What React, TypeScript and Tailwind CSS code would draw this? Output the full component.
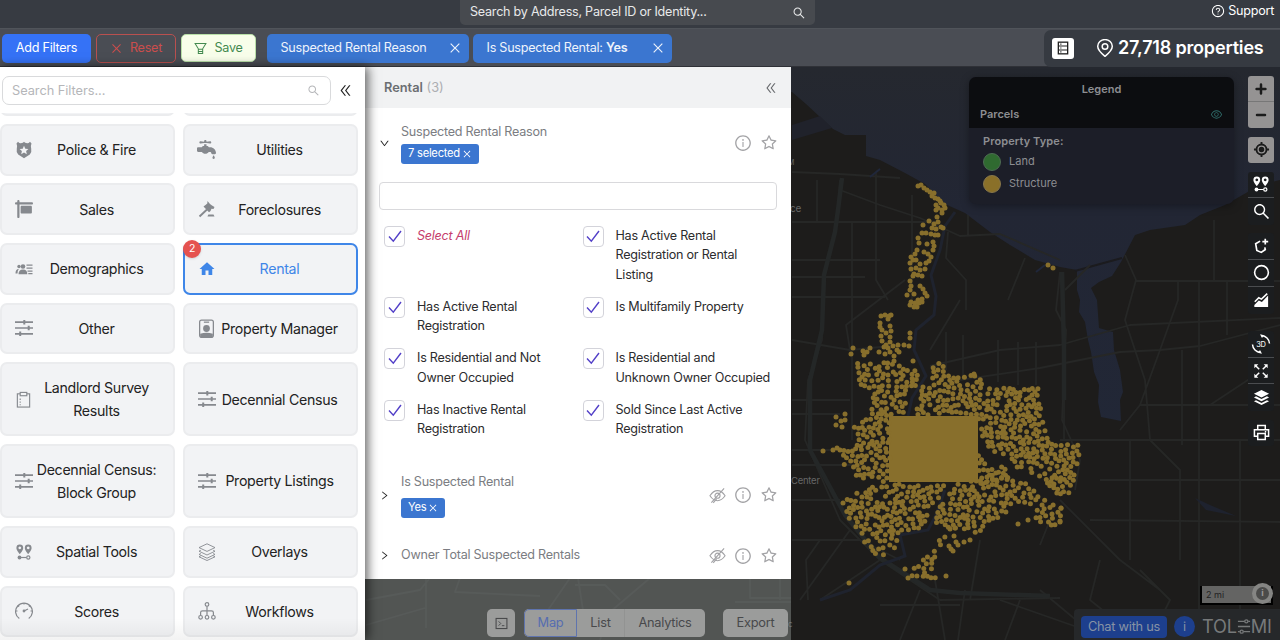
import React from "react";
import {
  AiOutlineClose, AiOutlineDoubleLeft, AiOutlineDown, AiOutlineEye, AiOutlineInfoCircle,
  AiOutlineQuestionCircle, AiOutlineRight, AiOutlineSearch, AiOutlineStar,
} from "react-icons/ai";
import { FaFaucetDrip, FaSignHanging } from "react-icons/fa6";
import { MdHome } from "react-icons/md";

type Pt = [number, number];

/* ---------- map data ---------- */

const CLUSTERS: Pt[][] = [
  [[853, 363], [897, 362], [902, 364], [910, 370], [918, 370], [920, 382], [908, 393], [905, 415], [870, 415], [873, 392], [860, 385]],
  [[922, 387], [930, 384], [945, 374], [975, 375], [995, 388], [1038, 386], [1040, 400], [1045, 425], [1048, 442], [1079, 444], [1079, 465], [1074, 485], [1068, 497], [1052, 495], [1047, 482], [1030, 475], [1032, 460], [1018, 472], [1010, 462], [985, 445], [977, 415], [915, 415], [918, 398]],
  [[853, 427], [872, 415], [890, 412], [890, 482], [856, 480], [853, 467], [843, 465], [842, 450], [854, 448]],
  [[978, 452], [990, 465], [1008, 468], [1010, 480], [978, 484]],
  [[843, 502], [868, 486], [890, 484], [945, 485], [935, 505], [928, 515], [922, 528], [900, 532], [896, 548], [885, 558], [875, 556], [862, 540], [852, 525], [846, 512]],
  [[952, 486], [978, 478], [1000, 470], [1010, 478], [1030, 485], [1046, 500], [1040, 503], [1010, 507], [1008, 515], [990, 522], [978, 533], [970, 532], [960, 530], [935, 525], [938, 508], [948, 498]],
  [[1036, 505], [1052, 502], [1062, 508], [1060, 525], [1045, 525], [1035, 520]],
  [[941, 536], [946, 536], [936, 555], [934, 566], [930, 575], [940, 580], [905, 580], [912, 570], [920, 562], [932, 553]],
  [[932, 366], [944, 361], [944, 372], [932, 379]],
];

const SINGLES: Pt[] = [
  [918, 186], [921, 185], [924, 188], [927, 190], [930, 192], [934, 193], [932, 196], [935, 198], [938, 199], [940, 201], [936, 205], [941, 203], [938, 208], [944, 205], [936, 210], [942, 210], [945, 208], [942, 213],
  [929, 221], [937, 217], [938, 222], [934, 224], [923, 225], [941, 227], [936, 229], [943, 228], [932, 228], [922, 233], [926, 233], [931, 234], [935, 235], [938, 235], [918, 238], [919, 243], [927, 244], [933, 242], [934, 246], [933, 250],
  [917, 250], [915, 254], [911, 257], [924, 252], [928, 254], [931, 257], [929, 261], [926, 263], [913, 260], [910, 263], [916, 260], [920, 264], [916, 268], [911, 269], [920, 270], [925, 269], [914, 274], [918, 275], [922, 276], [913, 276],
  [910, 281], [911, 286], [910, 290], [907, 295], [914, 294], [920, 286], [923, 289], [925, 293], [927, 296], [918, 300], [922, 299], [911, 302], [915, 303], [919, 303], [914, 307], [917, 307], [910, 305], [922, 302],
  [881, 316], [885, 315], [889, 316], [891, 315], [888, 319], [880, 323], [880, 327], [882, 330], [890, 326], [891, 331], [881, 336], [886, 333], [890, 337], [882, 341], [890, 342], [886, 345], [884, 347], [888, 348],
  [910, 333], [910, 338], [909, 346], [904, 345], [898, 345], [893, 346], [897, 350], [890, 352], [885, 354], [894, 356], [899, 352], [879, 352], [853, 348], [851, 354], [863, 351], [864, 355], [867, 352], [870, 348], [894, 361],
  [913, 361], [974, 374], [823, 451], [849, 583], [1018, 524], [1028, 520], [946, 576], [905, 569], [843, 503], [1048, 265], [1053, 268],
  [836, 417], [845, 414], [841, 421], [845, 420], [836, 425], [842, 427], [833, 450], [837, 448], [840, 450],
  [950, 529], [955, 528], [954, 536], [949, 546], [953, 551], [958, 545], [951, 549], [956, 542], [964, 542], [970, 540], [1061, 508], [1060, 521],
];

const ROADS = [
  "M792 172 L840 174 L900 178 M817 180 V222 M840 180 L836 230 L825 275 L822 340 L808 380 L805 440 L840 520 L880 560 L940 600 L1060 598",
  "M792 222 H940 M792 260 H880 M792 277 H865 M792 297 H885 M876 172 V280 L888 300 M912 195 V305 M852 222 V440",
  "M840 190 L880 205 L920 218 L960 236 L1000 234 L1060 260 M948 232 L946 258 L966 280 V310 M968 215 V235 M1025 258 L1008 300",
  "M792 340 L850 350 L900 345 M850 350 L846 325 L905 280 M792 400 H850 M792 414 H840 M792 450 H850 M792 465 H865",
  "M960 300 L930 350 M946 332 V370 M963 335 V380 M998 340 V382 M1018 342 V385 M1036 342 V385 M1064 352 V440",
  "M930 366 L1000 350 L1060 345 L1130 325 L1280 318 M960 380 L1040 368 L1120 352 L1160 350 L1200 346 L1280 325",
  "M1060 272 L1056 310 L1066 330 L1062 420 L1080 460 L1075 490 M1090 265 L1065 290",
  "M1125 255 L1136 280 L1125 320 L1145 380 L1150 440 L1180 470 V560 M1178 282 V300 L1160 350 L1140 405 L1120 430 M1135 281 H1280 M1214 220 V282 M1199 281 V640 M1227 281 V335 M1182 350 V445 M1140 405 H1280 M1210 405 L1260 372",
  "M792 500 H840 M792 540 H860 L900 560 M850 530 L800 600 M820 540 L806 560 L808 600 M880 560 L820 600 M880 605 H960 M920 590 L900 640 M935 580 L945 640 M965 590 L958 640",
  "M1060 500 L1120 560 L1160 590 M1040 590 L1100 640 M1100 560 L1090 600 L1140 640 M1140 570 L1170 600 L1150 640 M980 540 L970 600 M1000 600 L1100 635 M1020 600 L1005 640",
  "M1060 440 H1280 M1100 480 H1280 M1130 440 V560 M1240 440 V640 M1090 520 L1280 522 M1050 520 L1040 545",
  "M366 600 L420 590 L430 578 M426 578 V628 M460 578 L455 592 L540 596 M366 625 L425 608 M570 578 L548 610 M575 585 H605 L620 600 M578 578 L583 610 M650 578 L610 612 L600 640 M750 578 V598 H791 M735 602 H791 M780 578 V600",
];

function inside([x, y]: Pt, poly: Pt[]) {
  let hit = false;
  for (let i = 0, j = poly.length - 1; i < poly.length; j = i++) {
    const [xi, yi] = poly[i];
    const [xj, yj] = poly[j];
    if (yi > y !== yj > y && x < ((xj - xi) * (y - yi)) / (yj - yi) + xi) hit = !hit;
  }
  return hit;
}

function scatter(): Pt[] {
  let seed = 7321;
  const rnd = () => {
    seed = (seed * 1664525 + 1013904223) % 4294967296;
    return seed / 4294967296;
  };
  const out: Pt[] = [];
  for (const poly of CLUSTERS) {
    const xs = poly.map((p) => p[0]);
    const ys = poly.map((p) => p[1]);
    const x0 = Math.min(...xs), x1 = Math.max(...xs), y0 = Math.min(...ys), y1 = Math.max(...ys);
    const local: Pt[] = [];
    const tries = ((x1 - x0) * (y1 - y0)) / 8;
    for (let i = 0; i < tries; i++) {
      const p: Pt = [x0 + rnd() * (x1 - x0), y0 + rnd() * (y1 - y0)];
      if (!inside(p, poly)) continue;
      if (local.some((q) => Math.hypot(q[0] - p[0], q[1] - p[1]) < 3.6)) continue;
      local.push(p);
    }
    out.push(...local);
  }
  return out;
}

const DOTS = [...scatter(), ...SINGLES];

function MapCanvas() {
  return (
    <svg className="absolute inset-0 h-full w-full" viewBox="0 67 1280 573" aria-hidden="true">
      <defs>
        <linearGradient id="water" x1="0" y1="0" x2="0" y2="1">
          <stop offset="0" stopColor="#25282f" />
          <stop offset="0.25" stopColor="#222634" />
          <stop offset="1" stopColor="#212838" />
        </linearGradient>
      </defs>
      <rect x="0" y="67" width="1280" height="573" fill="url(#water)" />
      <path
        fill="#1d1c1b"
        d="M0 92H792L806 104L820 117L833 129L845 135H866V156L880 160L905 173L925 184L945 204L965 213L990 232L1010 245L1035 260L1060 267L1077 270L1077 290L1080 300L1079 312L1085 322L1088 340L1091 352L1094 372L1099 385L1098 402L1101 417L1121 421L1120 400L1123 392L1120 370L1114 350L1113 332L1099 328L1097 300L1091 288L1099 282L1112 276L1121 262L1135 235L1150 230L1185 225L1200 215L1225 205L1260 185L1280 180V640H0Z"
      />
      <path d="M1075 271L1100 264L1122 258" fill="none" stroke="#1b1b1e" strokeWidth="2" />
      <path d="M792 125L820 116L832 128L792 140Z" fill="#20222b" />
      <g fill="none" stroke="#262726" strokeWidth="1.800" strokeLinejoin="round">
        {ROADS.map((d) => <path key={d} d={d} />)}
      </g>
      <g fill="none" stroke="#242727" strokeWidth="4.500" strokeLinejoin="round">
        <path d="M842 178L838 210L835 232L824 275L822 330L810 380V450L845 515L880 558L930 590L960 593L1050 596M1062 272L1064 350V400" />
      </g>
      <path
        d="M955 212L945 226L940 250L931 275L936 296L934 315L916 330L914 350L926 376L912 398L908 416M945 490L936 515L928 530L900 535L905 556L880 565L850 590L820 600"
        fill="none" stroke="#1f232e" strokeWidth="3"
      />
      <path d="M870 177L880 169L876 172M1036 272L1045 265" fill="#20273a" stroke="#20273a" strokeWidth="2" />
      <path d="M1060 635L1064 626M1195 498L1210 505L1236 516L1206 510Z" fill="#1e222e" />
      <g fill="#886f2c">
        <rect x="889" y="416" width="89" height="66" />
        {DOTS.map(([x, y], i) => <circle key={i} cx={x} cy={y} r="2.5" />)}
      </g>
      <g fill="#666" fontFamily="Inter, sans-serif" fontSize="10">
        <text x="790" y="212">ce</text>
        <text x="791" y="484" fontSize="9.5">Center</text>
        <text x="788" y="165" fontSize="7">M</text>
        <text x="788" y="627" fontSize="8">c</text>
      </g>
    </svg>
  );
}

/* ---------- icons ---------- */

const svg = (children: React.ReactNode, cls = "h-[18px] w-[18px]") => (
  <svg viewBox="0 0 18 18" className={cls} fill="none" stroke="currentColor" strokeWidth="1.2">{children}</svg>
);

const Badge = () => svg(
  <>
    <path d="M1.5 2.5L3 .8Q5 3 6.6 2Q8 2 9 .8Q10 2 11.400 2Q13 3 15 .8L16.500 2.500Q15.400 5 16.200 7.500Q17 11 14.800 13.500L9 17.200L3.200 13.500Q1 11 1.800 7.500Q2.600 5 1.500 2.500Z" fill="currentColor" stroke="none" />
    <path d="M9 4.800L10.300 7.700L13.400 8L11.100 10.100L11.800 13.200L9 11.600L6.200 13.200L6.900 10.100L4.600 8L7.700 7.700Z" fill="#f3f4f6" stroke="none" />
  </>, "h-[18px] w-[18px]");
const Gavel = () => svg(
  <>
    <path d="M1.500 16.500L9 9.500" strokeWidth="1.900" />
    <path d="M9.500 1L12 4L14 5.500L16.500 7L15.500 9L13.500 8.800L12.500 11L11 12.200L5.500 6.500L7.500 5L9.300 3.500Z" fill="currentColor" stroke="none" />
    <path d="M9.500 16.500L10.300 14.500H15.500L16.500 16.500Z" fill="currentColor" stroke="none" />
  </>, "h-[18px] w-[18px]");
const People = () => svg(
  <g fill="currentColor" stroke="none">
    <circle cx="8" cy="6.500" r="2.300" /><circle cx="4" cy="6.500" r="1.700" />
    <path d="M3.500 14.200Q3.500 9.500 8 9.500T12.300 14.200ZM.5 13.500Q.3 9 3.800 8.900Q2.300 11 2.500 13.500ZM11.500 4.500H17.500V5.700H11.500ZM11.500 7.500H17.500V8.700H11.500ZM12.500 10.500H17.500V11.700H12.500ZM13.300 13H17.500V14.200H13.300Z" />
  </g>);
const Sliders = () => svg(
  <>
    <path d="M0 3.200H18M0 9H18M0 14.800H18" strokeWidth="1.700" />
    <path d="M9.300 1V5.400M13.700 6.800V11.200M5.200 12.600V17" strokeWidth="2" />
  </>);
const IdCard = () => svg(
  <>
    <rect x="2.500" y="1" width="13" height="16.500" rx="1.800" />
    <path d="M6.500 3H11.500" />
    <circle cx="9" cy="9" r="3.200" fill="currentColor" stroke="none" />
    <path d="M3 14Q9 12 15 14V17H3Z" fill="currentColor" stroke="none" />
  </>, "h-[19px] w-[19px]");
const Clipboard = () => svg(
  <>
    <rect x="2.500" y="3" width="13" height="14" />
    <rect x="5.500" y="1.500" width="7" height="3.500" fill="#f3f4f6" />
    <path d="M5.500 8V15" strokeDasharray="1.500 1.500" />
  </>, "h-[17px] w-[17px]");
const Pins = ({ cls }: { cls?: string }) => svg(
  <>
    <path fillRule="evenodd" d="M4.800 1.500A3.400 3.400 0 0 1 8.200 4.900C8.200 7.500 4.800 11 4.800 11S1.400 7.500 1.400 4.900A3.400 3.400 0 0 1 4.800 1.500ZM4.800 3.500A1.400 1.400 0 1 0 4.810 3.500ZM13.200 1.500A3.400 3.400 0 0 1 16.600 4.900C16.600 7.500 13.200 11 13.200 11S9.800 7.500 9.800 4.900A3.400 3.400 0 0 1 13.200 1.500ZM13.200 3.500A1.400 1.400 0 1 0 13.210 3.500Z" fill="currentColor" stroke="none" />
    <circle cx="4.500" cy="14.500" r="1.900" fill="currentColor" stroke="none" />
    <path d="M5 14.500H11.500" /><circle cx="13.300" cy="14.500" r="1.600" />
  </>, cls);
const Layers = () => svg(
  <path d="M9 .8L17 4.600L9 8.400L1 4.600ZM2.800 7.300L1 8.200L9 12L17 8.200L15.200 7.300M2.800 10.500L1 11.400L9 15.200L17 11.400L15.200 10.500M2.800 12.900L1 13.800L9 17.500L17 13.800L15.200 12.900" strokeWidth=".9" />);
const Gauge = () => svg(
  <>
    <path d="M4.300 16.500A8.400 8.400 0 1 1 13.700 16.500" />
    <path d="M9 9L13 7M9 1V2.500M2.800 3.500L4 4.700M15.200 3.500L14 4.700M1 9H2.500M15.500 9H17" />
    <circle cx="9" cy="9" r=".8" />
  </>);
const Tree = () => svg(
  <>
    <circle cx="9" cy="2.400" r="1.800" /><circle cx="2.600" cy="15.300" r="1.800" /><circle cx="9" cy="15.300" r="1.800" /><circle cx="15.400" cy="15.300" r="1.800" />
    <path d="M9 4.300V13.500M2.600 13.500V10.500Q2.600 8.800 4.500 8.800H13.500Q15.400 8.800 15.400 10.500V13.500" />
  </>);
const HiddenEye = () => svg(
  <>
    <path d="M1 9.300Q4.500 3.800 9 3.800T17 9.300Q13.500 14.500 9 14.500T1 9.300Z" />
    <circle cx="9" cy="9.200" r="2.700" /><path d="M2.500 16.500L16 1.500M4.500 16.700L8 12.700" />
  </>, "h-[17px] w-[17px]");
const Funnel = () => svg(
  <path d="M1.500 2H16.500L12 9.500V16H6V9.500ZM6 10H12M6 13H12" strokeWidth="1.400" />, "h-[13px] w-[13px]");
const MapPin = () => svg(
  <><path d="M9 17.300Q1.700 11.500 1.700 7.300A7.300 6.700 0 0 1 16.300 7.300Q16.300 11.500 9 17.300Z" strokeWidth="1.500" /><circle cx="9" cy="7.500" r="2.800" strokeWidth="1.500" /></>);
const Sheet = () => svg(
  <>
    <rect x="3" y="1.500" width="12" height="15" strokeWidth="1.700" />
    <path d="M3 6.500H15M3 11.500H15M5.500 4H7M5.500 9H7M5.500 14H7" strokeWidth="1.400" />
  </>, "h-[14px] w-[14px]");
const Locate = () => svg(
  <><circle cx="9" cy="9" r="5.300" strokeWidth="2" /><circle cx="9" cy="9" r="2.300" fill="currentColor" /><path d="M9 1V3.500M9 14.500V17M1 9H3.500M14.500 9H17" strokeWidth="2" /></>, "h-[17px] w-[17px]");
const PolyAdd = () => svg(
  <><path d="M8 3.500L3 6.500L4.300 14L9.300 16.200L13.800 13L13.300 10.500" strokeWidth="1.900" /><path d="M13.800.8V7.400M10.500 4.100H17.100" strokeWidth="1.900" /></>, "h-4 w-4");
const Circle = () => svg(<circle cx="9" cy="9" r="7.300" strokeWidth="1.700" />, "h-[17px] w-[17px]");
const Chart = () => svg(
  <><path d="M1.500 17V14.500L6.500 9.700L10 11.200L17 4V17Z" fill="currentColor" stroke="none" /><path d="M2 11L6.500 6.500L9.500 8L16 1.800" strokeWidth="1.800" /></>, "h-4 w-4");
const Rotate3D = () => (
  <svg viewBox="0 0 20 20" className="h-5 w-5" fill="none" stroke="currentColor" strokeWidth="1.500">
    <path d="M10.500 1.500A8.500 8.500 0 0 1 18.500 9.500M9.500 18.500A8.500 8.500 0 0 1 1.500 10.500" />
    <path d="M9 .2L13 1.200L11 4ZM11 19.800L7 18.800L9 16Z" fill="currentColor" stroke="none" />
    <text x="10" y="12.700" textAnchor="middle" fontSize="7.500" fontFamily="Inter, sans-serif" fill="currentColor" stroke="none">3D</text>
  </svg>
);
const Expand = () => svg(
  <>
    <path d="M3 3L7 7M15 3L11 7M3 15L7 11M15 15L11 11" strokeWidth="1.700" />
    <path d="M1.500 1.500H6L1.500 6ZM16.500 1.500V6L12 1.500ZM1.500 16.500V12L6 16.500ZM16.500 16.500H12L16.500 12Z" fill="currentColor" stroke="none" />
  </>, "h-4 w-4");
const Stack = () => svg(
  <g fill="currentColor" stroke="none">
    <path d="M9 1L17 5L9 9L1 5ZM3.200 7.800L9 10.700L14.800 7.800L17 9L9 13L1 9ZM3.200 11.800L9 14.700L14.800 11.800L17 13L9 17L1 13Z" />
  </g>, "h-[17px] w-[17px]");
const Printer = () => svg(
  <path d="M5 6V1.500H13V6M5 13H1.500V6H16.500V13H13M5 10H13V16.500H5ZM14 8.200H12.500" strokeWidth="1.600" />, "h-[17px] w-[17px]");
const Terminal = () => svg(
  <><rect x="1.500" y="2" width="15" height="14" strokeWidth="1.500" /><path d="M5 6L8 9L5 12M9.500 12H13" strokeWidth="1.300" /></>, "h-[13px] w-[13px]");

/* ---------- filter categories ---------- */

type Category = { label: string; icon: React.ReactNode; active?: boolean; tall?: boolean };

const CATEGORIES: Category[] = [
  { label: "Police & Fire", icon: <Badge /> },
  { label: "Utilities", icon: <FaFaucetDrip size={19} /> },
  { label: "Sales", icon: <FaSignHanging size={18} /> },
  { label: "Foreclosures", icon: <Gavel /> },
  { label: "Demographics", icon: <People /> },
  { label: "Rental", icon: <MdHome size={18} />, active: true },
  { label: "Other", icon: <Sliders /> },
  { label: "Property Manager", icon: <IdCard /> },
  { label: "Landlord Survey Results", icon: <Clipboard />, tall: true },
  { label: "Decennial Census", icon: <Sliders />, tall: true },
  { label: "Decennial Census: Block Group", icon: <Sliders />, tall: true },
  { label: "Property Listings", icon: <Sliders />, tall: true },
  { label: "Spatial Tools", icon: <Pins /> },
  { label: "Overlays", icon: <Layers /> },
  { label: "Scores", icon: <Gauge /> },
  { label: "Workflows", icon: <Tree /> },
];

function CategoryTile({ label, icon, active, tall }: Category) {
  return (
    <div
      className={`relative flex items-center rounded-[7px] border-2 bg-[#f2f3f5] pl-[12px] ${tall ? "h-[74.1px]" : "h-[51.8px]"} ${
        active ? "border-[#3f86e8] text-[#3f86e8]" : "border-[#ebecee] text-[#222]"
      }`}
    >
      {active && (
        <span className="absolute -top-[5px] -left-[2px] flex h-[18px] w-[18px] items-center justify-center rounded-full bg-[#e5524f] text-[10.500px] text-white shadow">2</span>
      )}
      <span className={`flex w-[19px] shrink-0 justify-center ${active ? "" : "text-[#86898e]"}`}>{icon}</span>
      <span className="flex-1 pt-[1px] pr-[13px] text-center text-[14.200px] leading-[22.300px] tracking-[-0.32px]">{label}</span>
    </div>
  );
}

function CategoryPanel() {
  return (
    <aside className="relative z-20 flex w-[365px] shrink-0 flex-col bg-white shadow-[3px_0_10px_rgba(0,0,0,0.6)]">
      <div className="flex h-[46px] shrink-0 items-center pt-[1px] pl-[2px]">
        <div className="flex h-[29px] w-[329px] items-center justify-between rounded-[7px] border border-[#d9dadc] pr-[10px] pl-[9px] text-[12.800px] tracking-[-0.05px] text-[#b5b6b9]">
          <span>Search Filters...</span>
          <AiOutlineSearch size={13} />
        </div>
        <AiOutlineDoubleLeft size={15} className="ml-[7px] text-[#222]" />
      </div>
      <div className="min-h-0 flex-1 overflow-hidden">
        <div className="-mt-[49px] grid w-[358px] grid-cols-2 gap-x-[8px] gap-y-[7.800px]">
          <div className="h-[52px] rounded-[7px] border-2 border-[#ebecee] bg-[#f2f3f5]" />
          <div className="h-[52px] rounded-[7px] border-2 border-[#ebecee] bg-[#f2f3f5]" />
          {CATEGORIES.map((c) => <CategoryTile key={c.label} {...c} />)}
        </div>
      </div>
      <div className="absolute inset-x-0 bottom-0 h-[22px] bg-linear-to-t from-black/5 to-transparent" />
    </aside>
  );
}

/* ---------- rental panel ---------- */

const REASONS: [string, string][] = [
  ["Select All", "Has Active Rental Registration or Rental Listing"],
  ["Has Active Rental Registration", "Is Multifamily Property"],
  ["Is Residential and Not Owner Occupied", "Is Residential and Unknown Owner Occupied"],
  ["Has Inactive Rental Registration", "Sold Since Last Active Registration"],
];

function Reason({ label, width }: { label: string; width: string }) {
  return (
    <label className="flex items-start">
      <span className="flex h-[21px] w-[21px] shrink-0 items-center justify-center rounded-[4px] border border-[#d3d3da] bg-white text-[#5340c8]">
        <svg viewBox="0 0 14 13" className="h-[13px] w-[14px]" fill="none" stroke="currentColor" strokeWidth="1.400"><path d="M1 6.500L5.300 11.200L13 1" /></svg>
      </span>
      <span className={`ml-[12px] ${width} text-[12.600px] leading-[19.500px] ${label === "Select All" ? "text-[#c63d6c] italic" : "text-[#2c2c2e]"}`}>{label}</span>
    </label>
  );
}

function RowActions({ hidden }: { hidden?: boolean }) {
  return (
    <div className="flex items-center gap-[8px] text-[#a3a3a6]">
      {hidden && <HiddenEye />}
      <AiOutlineInfoCircle size={18} />
      <AiOutlineStar size={18} />
    </div>
  );
}

function Chip({ children }: { children: React.ReactNode }) {
  return (
    <span className="flex h-[20px] w-fit items-center gap-[2px] rounded-[3px] bg-[#3b76d0] px-[7px] text-[11.200px] text-white">
      {children}<AiOutlineClose size={10} />
    </span>
  );
}

function RentalPanel() {
  return (
    <section className="relative z-10 flex h-[511.500px] w-[426px] shrink-0 flex-col bg-white text-[12.600px] text-[#7b7d82]">
      <header className="flex h-[41px] shrink-0 items-center bg-[#f1f2f3] pt-[1px] pr-[13px] pl-[19px]">
        <span className="flex-1 text-[12.800px] tracking-normal"><b className="font-semibold text-[#6b6e72]">Rental</b> <span className="text-[#acaeb2]">(3)</span></span>
        <AiOutlineDoubleLeft size={14} className="text-[#66686b]" />
      </header>
      <div className="flex h-[70px] shrink-0 items-center pr-[13px] pl-[14px]">
        <AiOutlineDown size={11} className="text-[#222]" />
        <div className="ml-[11px] flex flex-1 flex-col gap-[4px] pt-[1px]">
          <span className="leading-[16px]">Suspected Rental Reason</span>
          <Chip>7 selected</Chip>
        </div>
        <RowActions />
      </div>
      <div className="mt-[4px] ml-[14px] h-[28px] w-[398px] shrink-0 rounded-[4px] border border-[#d9d9dc]" />
      <div className="mt-[15.500px] ml-[19px] flex flex-col gap-[12.600px]">
        {REASONS.map(([a, b]) => (
          <div key={a} className="grid grid-cols-[198.500px_1fr]">
            <Reason label={a} width="w-[130px]" />
            <Reason label={b} width="w-[155.500px]" />
          </div>
        ))}
      </div>
      <div className="mt-[31px] flex h-[51px] shrink-0 items-center pr-[13px] pl-[14px]">
        <AiOutlineRight size={11} className="text-[#222]" />
        <div className="ml-[11px] flex flex-1 flex-col gap-[8px]">
          <span className="leading-[17px]">Is Suspected Rental</span>
          <Chip>Yes</Chip>
        </div>
        <RowActions hidden />
      </div>
      <div className="mt-[25px] flex h-[20px] shrink-0 items-center pr-[13px] pl-[14px]">
        <AiOutlineRight size={11} className="text-[#222]" />
        <span className="ml-[11px] flex-1">Owner Total Suspected Rentals</span>
        <RowActions hidden />
      </div>
    </section>
  );
}

/* ---------- map overlays ---------- */

function Legend() {
  return (
    <div className="h-[127px] w-[265px] overflow-hidden rounded-[7px] bg-[#1c1e28] text-[11px] tracking-normal text-[#8d8e92] shadow-[0_2px_8px_rgba(0,0,0,0.35)]">
      <div className="flex h-[51px] flex-col bg-[#0c0d10] font-semibold">
        <div className="pt-[4px] text-center leading-[16px]">Legend</div>
        <div className="mt-[9px] flex items-center justify-between pr-[11px] pl-[11px] leading-[16px]">
          <span>Parcels</span><AiOutlineEye size={13} className="text-[#2f6a68]" />
        </div>
      </div>
      <div className="flex flex-col gap-[4px] pt-[5px] pl-[14px]">
        <b className="leading-[16px] font-semibold tracking-[0.1px]">Property Type:</b>
        <div className="flex h-[18px] items-center gap-[8px]"><i className="h-[18px] w-[18px] rounded-full border border-[#4d6a52] bg-[#2f6a30]" /><span className="-mt-[2px]">Land</span></div>
        <div className="flex h-[18px] items-center gap-[8px]"><i className="h-[18px] w-[18px] rounded-full border border-[#86764a] bg-[#8a7029]" /><span className="-mt-[2px]">Structure</span></div>
      </div>
    </div>
  );
}

function ToolGroup({ items, light }: { items: React.ReactNode[]; light?: boolean }) {
  return (
    <div className={`flex w-[26px] flex-col overflow-hidden rounded-[3px] ${light ? "divide-y divide-[#777] bg-[#959393] text-[#1b1b1b]" : "divide-y divide-[#4a4c4f] bg-[#1b1d1f] text-white"}`}>
      {items.map((icon, i) => (
        <span key={i} className={`flex items-center justify-center ${light ? "h-[26.200px]" : "h-[26.700px]"}`}>{icon}</span>
      ))}
    </div>
  );
}

const Plus = () => svg(<path d="M9 4V14M4 9H14" strokeWidth="2.800" strokeLinecap="round" />, "h-4 w-4");
const Minus = () => svg(<path d="M4.500 9H13.500" strokeWidth="2.800" strokeLinecap="round" />, "h-4 w-4");

function ViewSwitcher() {
  return (
    <div className="flex h-[28px] items-stretch text-[12.800px] text-[#48494b]">
      <span className="flex w-[28px] items-center justify-center rounded-[5px] bg-[#9b9c9b]"><Terminal /></span>
      <div className="ml-[9px] flex overflow-hidden rounded-[5px] bg-[#9b9c9b]">
        <span className="flex w-[53px] items-center justify-center rounded-l-[5px] border border-[#5f74ae] text-[#566db0]">Map</span>
        <span className="flex w-[48px] items-center justify-center border-r border-[#929392]">List</span>
        <span className="flex w-[80px] items-center justify-center">Analytics</span>
      </div>
      <span className="ml-[18px] flex w-[65px] items-center justify-center rounded-[5px] bg-[#9b9c9b]">Export</span>
    </div>
  );
}

function Logo() {
  return (
    <div className="flex items-center text-[18.200px] leading-none tracking-[-0.2px] text-[#77797a]">
      <span>TOL</span>
      <svg viewBox="0 0 15 16" className="h-[15px] w-[14px] shrink-0" fill="none" stroke="currentColor" strokeWidth="1.400">
        <path d="M1 2.500H8M12 2.500H14M1 8H14M1 13.500H3M7 13.500H14" /><circle cx="10" cy="2.500" r="1.700" /><circle cx="5" cy="13.500" r="1.700" />
      </svg>
      <span>MI</span>
    </div>
  );
}

/* ---------- page ---------- */

const Tag = ({ children, width }: { children: React.ReactNode; width: string }) => (
  <span className={`flex h-[29px] ${width} items-center justify-between rounded-[5px] bg-[#3b76d0] pr-[7px] pl-[14px] text-[12.600px] text-[#eef3fb]`}>
    <span>{children}</span><AiOutlineClose size={14} />
  </span>
);

export default function App() {
  return (
    <div className="flex h-[640px] w-[1280px] flex-col overflow-hidden bg-[#1d1c1b] font-['Inter',sans-serif] tracking-[-0.25px]">
      <header className="flex h-[28px] shrink-0 items-start bg-[#373b42] text-white">
        <div className="ml-[460px] flex h-[25px] w-[355px] items-center justify-between rounded-b-[5px] bg-[#474a4f] pr-[9px] pl-[10px] text-[12.600px] text-[#e8e9ea]">
          <span>Search by Address, Parcel ID or Identity...</span>
          <AiOutlineSearch size={14} />
        </div>
        <div className="ml-auto flex h-[22px] items-center gap-[3px] pr-[6px] text-[12.600px]"><AiOutlineQuestionCircle size={14} />Support</div>
      </header>
      <div className="flex h-[39px] shrink-0 items-center border-t border-b border-t-[#50545a] border-b-[#2f3137] bg-[#4a4d54] pt-[1px] pl-[2px]">
        <span className="flex h-[29px] w-[89px] items-center justify-center rounded-[5px] bg-[#3572f6] text-[12.600px] text-white">Add Filters</span>
        <span className="ml-[5px] flex h-[29px] w-[80px] items-center justify-center gap-[7px] rounded-[5px] border border-[#b9504f] text-[12.600px] text-[#cb4d4c]"><AiOutlineClose size={13} />Reset</span>
        <span className="ml-[5px] flex h-[28px] w-[75px] items-center justify-center gap-[7px] rounded-[5px] border border-[#b9e0a8] bg-[#f8feea] text-[12.600px] text-[#438a50]"><Funnel />Save</span>
        <div className="ml-[10.500px] flex gap-[4px]">
          <Tag width="w-[202px]">Suspected Rental Reason</Tag>
          <Tag width="w-[199px]">Is Suspected Rental: <b className="font-semibold">Yes</b></Tag>
        </div>
        <div className="ml-auto flex h-[37px] w-[236px] items-center rounded-l-[7px] bg-[#363a41] pl-[8px] text-white">
          <span className="flex h-[21px] w-[22px] items-center justify-center rounded-[3px] bg-white text-[#222]"><Sheet /></span>
          <span className="ml-[22px]"><MapPin /></span>
          <span className="ml-[4px] -mt-[1px] text-[18px] font-semibold tracking-[-0.18px]">27,718 properties</span>
        </div>
      </div>
      <main className="relative flex min-h-0 flex-1">
        <MapCanvas />
        <CategoryPanel />
        <div className="flex w-[426px] flex-col">
          <RentalPanel />
          <div className="relative flex flex-1 items-end justify-end bg-[#959b98]/45 pr-[3px] pb-[3px]"><ViewSwitcher /></div>
        </div>
        <div className="relative flex flex-1 flex-col">
          <div className="flex items-start justify-end gap-[14px] pt-[9px] pr-[6px]">
            <div className="pt-[1px]"><Legend /></div>
            <div className="flex flex-col gap-[8.500px]">
              <ToolGroup light items={[<Plus />, <Minus />]} />
              <ToolGroup light items={[<Locate />]} />
              <ToolGroup items={[<Pins cls="h-[18px] w-[18px]" />, <AiOutlineSearch size={19} />]} />
              <ToolGroup items={[<PolyAdd />, <Circle />, <Chart />]} />
              <div className="mt-[9px]"><ToolGroup items={[<Rotate3D />, <Expand />, <Stack />]} /></div>
              <ToolGroup items={[<Printer />]} />
            </div>
          </div>
          <div className="mt-auto flex flex-col items-end">
            <div className="mr-[7px] mb-[4px] flex h-[19px] w-[73px] items-center justify-between border-2 border-t-0 border-black bg-[#646463] pl-[4px] text-[9px] tracking-normal text-[#222]">
              <span>2 mi</span>
              <span className="-mt-[3px] -mr-[2px] flex h-[21px] w-[21px] items-center justify-center rounded-full bg-[#858583]">
                <i className="flex h-[13px] w-[13px] items-center justify-center rounded-full bg-[#4b4b4a] text-[9px] font-bold text-[#999] not-italic">i</i>
              </span>
            </div>
            <div className="flex h-[31px] w-[206px] items-center rounded-tl-[4px] bg-[#26282a] pt-[4px] pl-[7px] text-[12.800px] text-[#8793a5]">
              <span className="flex h-[22px] w-[86px] shrink-0 items-center justify-center rounded-[4px] bg-[#1d3f8d]">Chat with us</span>
              <span className="mr-[7px] ml-[7px] flex h-[21px] w-[21px] shrink-0 items-center justify-center rounded-full bg-[#1d3f8d]">i</span>
              <Logo />
            </div>
          </div>
        </div>
      </main>
    </div>
  );
}
